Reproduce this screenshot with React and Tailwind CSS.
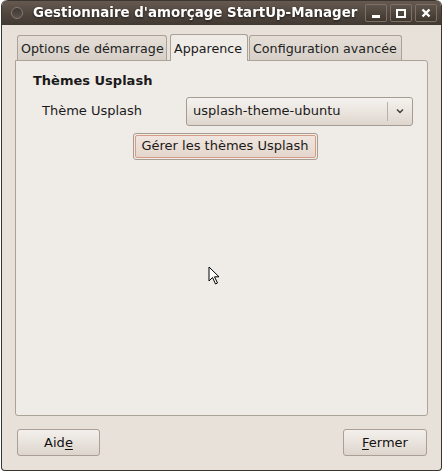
import React from 'react';

const font = { fontFamily: '"DejaVu Sans", sans-serif' };

const Tab = ({ label, active, className = '' }) => (
  <div
    className={
      active
        ? 'relative z-10 -mb-px h-[27px] px-[3px] pt-[4px] whitespace-nowrap bg-[#efebe7] border border-b-0 border-[#a9a096] rounded-t-[3px] text-[#1a1a1a] ' + className
        : 'h-[25px] mt-[2px] px-[3px] pt-[3px] whitespace-nowrap bg-gradient-to-b from-[#e4ded7] to-[#d7d0c8] border border-b-0 border-[#aaa197] rounded-t-[3px] text-[#222] ' + className
    }
  >
    {label}
  </div>
);

const Button = ({ children, className = '' }) => (
  <button
    className={
      'h-[27px] rounded-[3px] border border-[#a99f95] bg-gradient-to-b from-[#f3efeb] via-[#e9e3dd] to-[#ddd5cd] text-[13px] text-[#111] ' +
      className
    }
  >
    {children}
  </button>
);

const Cursor = () => (
  <svg className="absolute left-[208px] top-[266px]" width="14" height="20" viewBox="0 0 14 20">
    <path d="M1 1 L1 15 L4.5 11.5 L7.5 18 L9.5 17 L6.5 10.8 L11 10.8 Z" fill="#fff" stroke="#000" strokeWidth="1" strokeLinejoin="round" />
  </svg>
);

export default function App() {
  return (
    <div className="relative w-[443px] h-[472px] bg-white" style={font}>
      <div className="ml-px w-[441px] h-[471px] flex flex-col border border-t-0 border-[#3b3530] rounded-t-[6px] rounded-b-[4px] overflow-hidden bg-[#e7e1da]">
        {/* Title bar */}
        <div className="h-[25px] flex items-center bg-gradient-to-b from-[#665a50] via-[#52473f] to-[#413933] rounded-t-[6px] border-t border-[#3b3530]">
          <div className="ml-[9px] w-[12px] h-[12px] rounded-full bg-gradient-to-b from-[#3f3833] to-[#5a514a] border border-[#867b71]" />
          <div className="ml-[10px] text-[13.4px] font-bold text-white drop-shadow-[0_1px_1px_rgba(0,0,0,0.6)]">
            Gestionnaire d'amorçage StartUp-Manager
          </div>
          <div className="ml-auto mr-[4px] flex gap-[3px]">
            {['min', 'max', 'close'].map((k) => (
              <div
                key={k}
                className="w-[22px] h-[18px] rounded-[2px] border border-[#7d7167] bg-gradient-to-b from-[#5e544b] to-[#40382f] flex items-center justify-center"
              >
                {k === 'min' && <div className="mt-[7px] w-[8px] h-[3px] bg-white" />}
                {k === 'max' && <div className="w-[10px] h-[9px] border-2 border-white" />}
                {k === 'close' && (
                  <svg width="10" height="10" viewBox="0 0 10 10">
                    <path d="M1.5 1.5 L8.5 8.5 M8.5 1.5 L1.5 8.5" stroke="#fff" strokeWidth="2.4" />
                  </svg>
                )}
              </div>
            ))}
          </div>
        </div>

        {/* Body */}
        <div className="flex-1 flex flex-col px-[13px] pt-[9px] pb-[14px]">
          {/* Tabs */}
          <div className="flex items-end ml-[2px] h-[26px] text-[12.7px]">
            <Tab label="Options de démarrage" className="w-[150px]" />
            <Tab label="Apparence" active className="ml-[3px] w-[78px]" />
            <Tab label="Configuration avancée" className="ml-[1px] w-[153px]" />
          </div>

          {/* Panel */}
          <div className="h-[356px] bg-[#efebe7] border border-[#aca398] rounded-b-[3px] rounded-tr-[3px] pl-[17px] pt-[10px] text-[13px] text-[#1a1a1a]">
            <div className="font-bold">Thèmes Usplash</div>
            <div className="mt-[6px] flex items-center">
              <div className="ml-[9px] w-[144px]">Thème Usplash</div>
              <div className="w-[227px] h-[29px] flex items-center rounded-[3px] border border-[#a59b91] bg-gradient-to-b from-[#f5f2ef] via-[#ebe5df] to-[#ddd6ce]">
                <div className="flex-1 pl-[6px]">usplash-theme-ubuntu</div>
                <div className="w-px h-[19px] bg-[#b9b0a7]" />
                <svg className="mx-[8px]" width="8" height="6" viewBox="0 0 8 6">
                  <path d="M1 1.5 L4 4.5 L7 1.5" fill="none" stroke="#3a3a3a" strokeWidth="1.4" />
                </svg>
              </div>
            </div>
            <div className="mt-[7px] flex justify-center pr-[13px]">
              <div className="ml-[3px] rounded-[3px] border border-[#a69c92] p-px">
                <div className="w-[181px] h-[23px] flex items-center justify-center rounded-[2px] border border-[#d79c86] bg-gradient-to-b from-[#f0e6df] to-[#e4d6cc]">
                  Gérer les thèmes Usplash
                </div>
              </div>
            </div>
          </div>

          {/* Footer buttons */}
          <div className="mt-auto flex justify-between pl-[2px] pr-px">
            <Button className="w-[83px]">
              Aid<span className="underline underline-offset-2">e</span>
            </Button>
            <Button className="w-[84px]">
              <span className="underline underline-offset-2">F</span>ermer
            </Button>
          </div>
        </div>
      </div>
      <Cursor />
    </div>
  );
}
